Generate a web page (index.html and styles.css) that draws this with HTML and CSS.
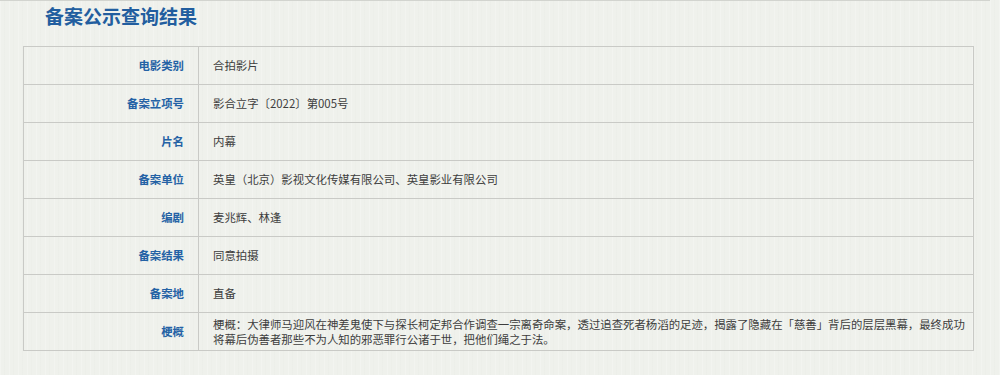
FILE: index.html
```html
<!DOCTYPE html>
<html lang="zh-CN">
<head>
<meta charset="utf-8">
<title>备案公示查询结果</title>
<link rel="stylesheet" href="styles.css">
</head>
<body>
<div class="page">
  <div class="header">
    <h1 class="title">备案公示查询结果</h1>
  </div>
  <table class="result">
    <tr><th>电影类别</th><td>合拍影片</td></tr>
    <tr><th>备案立项号</th><td>影合立字〔2022〕第005号</td></tr>
    <tr><th>片名</th><td>内幕</td></tr>
    <tr><th>备案单位</th><td>英皇（北京）影视文化传媒有限公司、英皇影业有限公司</td></tr>
    <tr><th>编剧</th><td>麦兆辉、林逢</td></tr>
    <tr><th>备案结果</th><td>同意拍摄</td></tr>
    <tr><th>备案地</th><td>直备</td></tr>
    <tr><th>梗概</th><td class="multi">梗概：大律师马迎风在神差鬼使下与探长柯定邦合作调查一宗离奇命案，透过追查死者杨滔的足迹，揭露了隐藏在「慈善」背后的层层黑幕，最终成功将幕后伪善者那些不为人知的邪恶罪行公诸于世，把他们绳之于法。</td></tr>
  </table>
</div>
</body>
</html>
```

FILE: styles.css
```css
html, body {
  margin: 0;
  padding: 0;
}
body {
  background-color: #eff1ec;
  background-image: repeating-linear-gradient(90deg, rgba(255,255,255,0.22) 0 1px, rgba(0,0,0,0) 1px 4px, rgba(210,214,205,0.08) 4px 5px, rgba(0,0,0,0) 5px 9px);
  font-family: "Noto Sans CJK SC", "Microsoft YaHei", sans-serif;
  width: 1000px;
  height: 375px;
  overflow: hidden;
}
.page {
  border-top: 1px solid #d2d4cf;
  width: 990px;
  height: 374px;
}
.header {
  height: 45px;
}
.title {
  margin: 0 0 0 45px;
  padding-top: 1px;
  font-size: 19px;
  line-height: 28px;
  font-weight: bold;
  color: #225e9f;
}
.result {
  margin-left: 23px;
  width: 951px;
  border-collapse: collapse;
  table-layout: fixed;
}
.result th,
.result td {
  border: 1px solid #c9cac6;
  height: 37px;
  padding: 0;
  font-size: 11.4px;
  line-height: 15px;
  vertical-align: middle;
}
.result th {
  width: 160px;
  padding-right: 14px;
  text-align: right;
  font-weight: bold;
  color: #2462a5;
}
.result td {
  padding-left: 14px;
  padding-right: 4px;
  text-align: left;
  color: #3d3d3d;
}
.result td.multi {
  line-height: 15px;
}
```
